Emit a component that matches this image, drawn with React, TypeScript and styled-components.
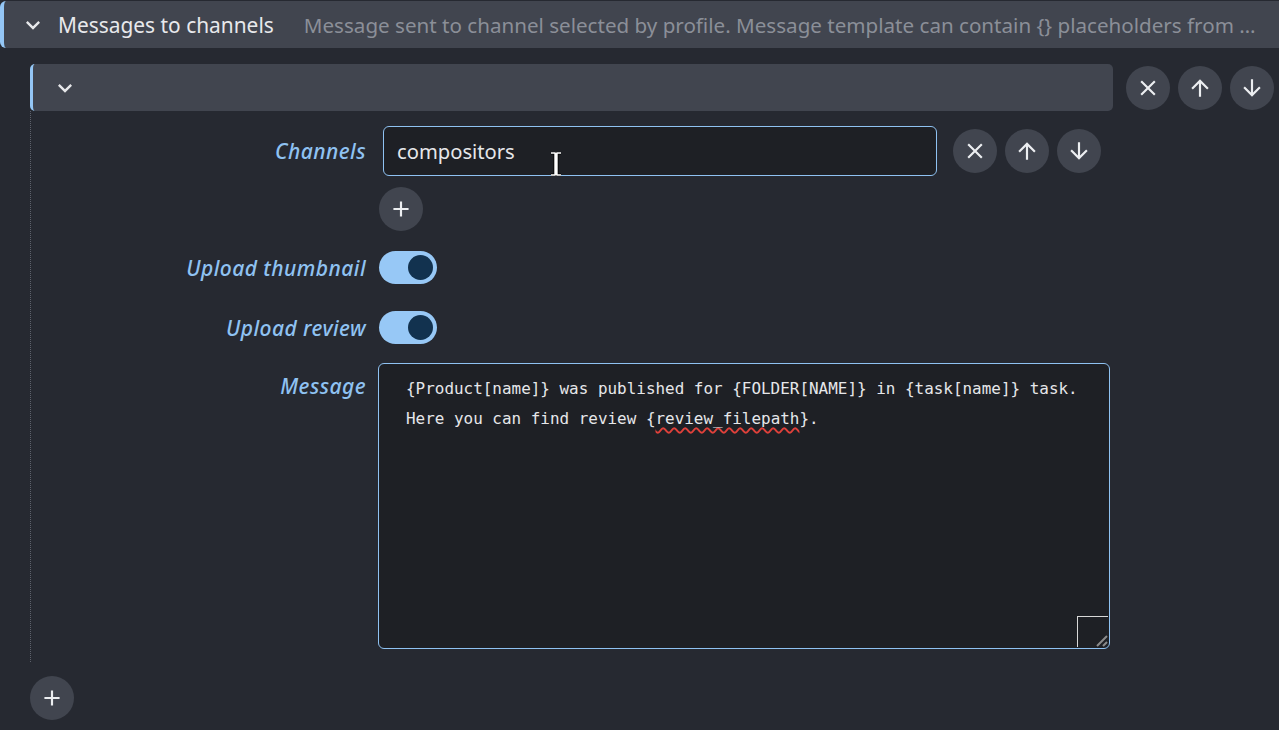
import React from "react";
import styled, { createGlobalStyle } from "styled-components";
import { MdExpandMore, MdClose, MdArrowUpward, MdArrowDownward, MdAdd } from "react-icons/md";

const Global = createGlobalStyle`
  html, body { margin: 0; padding: 0; background: #262931; }
  body { font-family: "Noto Sans", "Open Sans", sans-serif; color: #e4e5e8; }
  * { box-sizing: border-box; }
`;

const Page = styled.div`
  width: 1279px;
  height: 730px;
  overflow: hidden;
  padding-top: 1px;
  background: #262931;
`;

const SectionHeader = styled.div`
  display: flex;
  align-items: center;
  height: 47px;
  background: #41454f;
  border-left: 4px solid #94c6f5;
  border-radius: 6px 0 0 6px;
  padding-left: 15px;
  padding-right: 14px;
  overflow: hidden;
`;

const Chevron = styled.span<{ $size?: number }>`
  display: flex;
  align-items: center;
  justify-content: center;
  color: #e6e7ea;
  font-size: ${(p) => p.$size ?? 28}px;
  flex: none;
`;

const Title = styled.span`
  font-size: 20.9px;
  color: #e8e9ec;
  margin-left: 11px;
  white-space: nowrap;
  flex: none;
`;

const Description = styled.span`
  font-size: 20.6px;
  color: #8b8f98;
  margin-left: 30px;
  white-space: nowrap;
  overflow: hidden;
  text-overflow: ellipsis;
  min-width: 0;
`;

const Body = styled.div`
  padding-left: 30px;
  padding-top: 16px;
`;

const ItemRow = styled.div`
  display: flex;
  align-items: center;
  padding-right: 5px;
`;

const ItemHeader = styled.div`
  flex: 1;
  height: 47px;
  background: #41454f;
  border-left: 3px solid #94c6f5;
  border-radius: 5px;
  display: flex;
  align-items: center;
  padding-left: 18px;
  margin-right: 13px;
`;

const ButtonGroup = styled.div`
  display: flex;
  gap: 8px;
  flex: none;
`;

const CircleButton = styled.button`
  width: 44px;
  height: 44px;
  border-radius: 50%;
  border: none;
  background: #41454f;
  color: #eceef1;
  display: flex;
  align-items: center;
  justify-content: center;
  padding: 0;
  font-size: 26px;
  flex: none;
`;

const ItemBody = styled.div`
  border-left: 1px dotted #5d616b;
  padding-top: 15px;
  padding-bottom: 13px;
  display: flex;
  flex-direction: column;
`;

const FormRow = styled.div<{ $mt?: number }>`
  display: flex;
  align-items: center;
  margin-top: ${(p) => p.$mt ?? 0}px;
`;

const FormRowTop = styled(FormRow)`
  align-items: flex-start;
`;

const Label = styled.div<{ $pt?: number }>`
  width: 335px;
  flex: none;
  text-align: right;
  font-style: italic;
  font-weight: 500;
  font-size: 21px;
  letter-spacing: 0.45px;
  color: #8fc2f2;
  padding-top: ${(p) => p.$pt ?? 0}px;
  margin-right: 13px;
  white-space: nowrap;
`;

const Spacer = styled.div`
  width: 348px;
  flex: none;
`;

const InputWrap = styled.div`
  position: relative;
  width: 554px;
  height: 50px;
  margin-left: 4px;
  margin-right: 16px;
  background: #1e2025;
  border: 1px solid #8fc2f2;
  border-radius: 6px;
  display: flex;
  align-items: center;
  padding-left: 13px;
  font-size: 20.2px;
  color: #e6e7ea;
`;

const Cursor = styled.svg`
  position: absolute;
  left: 166px;
  top: 25px;
`;

const Toggle = styled.div`
  width: 58px;
  height: 33px;
  border-radius: 17px;
  background: #97c8f6;
  display: flex;
  align-items: center;
  justify-content: flex-end;
  padding-right: 4px;
`;

const Knob = styled.div`
  width: 25px;
  height: 25px;
  border-radius: 50%;
  background: #12324f;
`;

const TextArea = styled.div`
  position: relative;
  width: 732px;
  height: 286px;
  margin-left: -1px;
  background: #1e2025;
  border: 1px solid #8fc2f2;
  border-radius: 6px;
  padding: 10px 0 0 27px;
  font-family: "DejaVu Sans Mono", "Liberation Mono", monospace;
  font-size: 15.95px;
  line-height: 30px;
  color: #e6e7ea;
  white-space: pre;
`;

const Misspelled = styled.span`
  text-decoration: underline wavy #e0403a;
  text-decoration-thickness: 1.5px;
  text-underline-offset: 3px;
`;

const Resizer = styled.div`
  position: absolute;
  right: 1px;
  bottom: 1px;
  width: 31px;
  height: 31px;
  border-top: 1px solid #d8d8d8;
  border-left: 1px solid #d8d8d8;
  display: flex;
  align-items: flex-end;
  justify-content: flex-end;
`;

const Footer = styled.div`
  padding-left: 30px;
  margin-top: 14px;
`;

export default function App() {
  return (
    <Page>
      <Global />
      <SectionHeader>
        <Chevron $size={28}>
          <MdExpandMore />
        </Chevron>
        <Title>Messages to channels</Title>
        <Description>
          Message sent to channel selected by profile. Message template can contain {"{}"} placeholders from anatomyData or
          {" "}review_filepath.
        </Description>
      </SectionHeader>
      <Body>
        <ItemRow>
          <ItemHeader>
            <Chevron $size={28}>
              <MdExpandMore />
            </Chevron>
          </ItemHeader>
          <ButtonGroup>
            <CircleButton>
              <MdClose />
            </CircleButton>
            <CircleButton>
              <MdArrowUpward />
            </CircleButton>
            <CircleButton>
              <MdArrowDownward />
            </CircleButton>
          </ButtonGroup>
        </ItemRow>
        <ItemBody>
          <FormRow>
            <Label>Channels</Label>
            <InputWrap>
              compositors
              <Cursor width="12" height="24" viewBox="0 0 12 24">
                <path d="M1 1h4v22H1M11 1H7v22h4M6 1v22" stroke="#000" strokeWidth="3" fill="none" />
                <path d="M1 1h4v22H1M11 1H7v22h4M6 1v22" stroke="#fff" strokeWidth="1.4" fill="none" />
              </Cursor>
            </InputWrap>
            <ButtonGroup>
              <CircleButton>
                <MdClose />
              </CircleButton>
              <CircleButton>
                <MdArrowUpward />
              </CircleButton>
              <CircleButton>
                <MdArrowDownward />
              </CircleButton>
            </ButtonGroup>
          </FormRow>
          <FormRow $mt={11}>
            <Spacer />
            <CircleButton>
              <MdAdd />
            </CircleButton>
          </FormRow>
          <FormRow $mt={20}>
            <Label>Upload thumbnail</Label>
            <Toggle>
              <Knob />
            </Toggle>
          </FormRow>
          <FormRow $mt={27}>
            <Label>Upload review</Label>
            <Toggle>
              <Knob />
            </Toggle>
          </FormRow>
          <FormRowTop $mt={19}>
            <Label $pt={9}>Message</Label>
            <TextArea>
              {"{Product[name]} was published for {FOLDER[NAME]} in {task[name]} task.\nHere you can find review {"}
              <Misspelled>review_filepath</Misspelled>
              {"}."}
              <Resizer>
                <svg width="14" height="14" viewBox="0 0 14 14">
                  <path d="M3 13L13 3M9 13l4-4" stroke="#8a8a8a" strokeWidth="2" />
                </svg>
              </Resizer>
            </TextArea>
          </FormRowTop>
        </ItemBody>
      </Body>
      <Footer>
        <CircleButton>
          <MdAdd />
        </CircleButton>
      </Footer>
    </Page>
  );
}
